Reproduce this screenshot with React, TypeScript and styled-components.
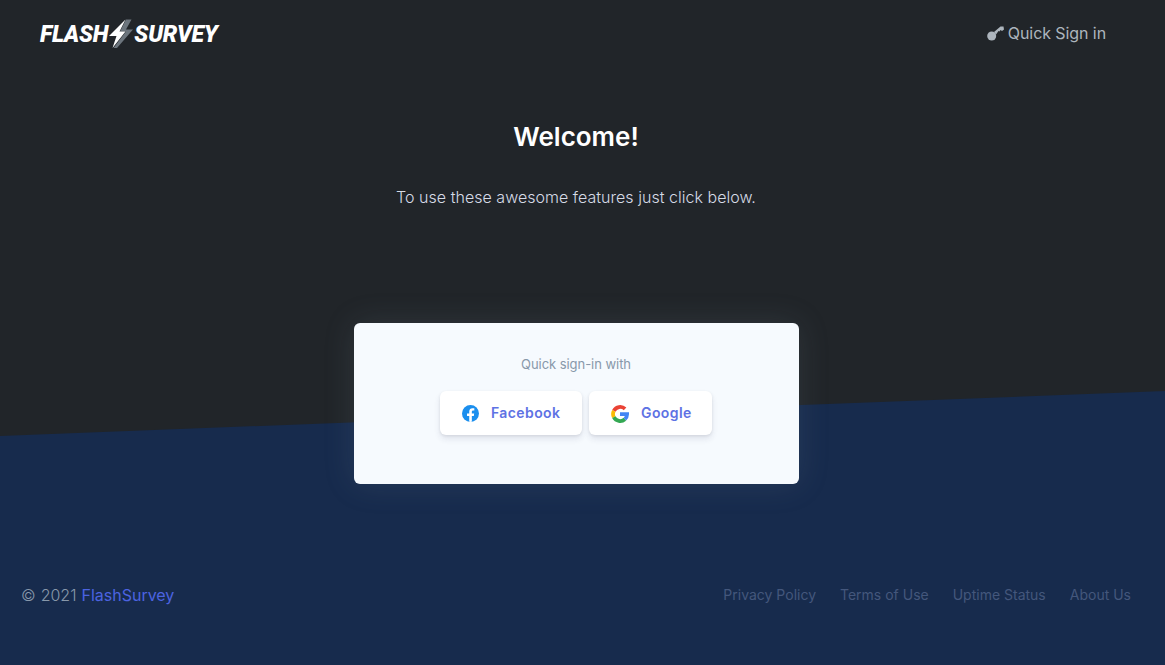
import React from 'react';
import styled, {createGlobalStyle} from "styled-components";

const GlobalStyle = createGlobalStyle`
  html, body {
    margin: 0;
    padding: 0;
    height: 100%;
  }
  body {
    font-family: Inter, "Liberation Sans", sans-serif;
    background: #212529;
  }
`;

const Page = styled.div`
  position: relative;
  width: 100%;
  height: 665px;
  overflow: hidden;
  background: #212529;
  display: flex;
  flex-direction: column;

  /* slanted blue band behind the content */
  &::before {
    content: "";
    position: absolute;
    left: 0;
    right: 0;
    top: 390px;
    bottom: 0;
    background: #172b4d;
    clip-path: polygon(0 46px, 100% 1px, 100% 100%, 0 100%);
  }
`;

const Header = styled.header`
  position: relative;
  height: 66px;
  padding: 0 59px 0 40px;
  display: flex;
  align-items: center;
  justify-content: space-between;
`;

const Logo = styled.a`
  display: flex;
  align-items: center;
  color: #fff;
  font-family: Roboto, Inter, sans-serif;
  font-size: 23px;
  font-weight: 900;
  font-style: italic;
  letter-spacing: -0.2px;
  line-height: 1;
`;

const LogoWord = styled.span`
  padding-top: 2px;
`;

const LogoBolt = styled.svg`
  width: 26px;
  height: 34px;
`;

const SignInLink = styled.a`
  display: flex;
  align-items: center;
  gap: 3px;
  color: #adb5bd;
  font-size: 16px;
  font-weight: 400;
  letter-spacing: -0.08px;
`;

const Main = styled.main`
  position: relative;
  padding-right: 13px;
`;

const Hero = styled.section`
  display: flex;
  flex-direction: column;
  align-items: center;
  padding-top: 55px;
`;

const Title = styled.h1`
  margin: 0;
  color: #fff;
  font-size: 26px;
  font-weight: 600;
  line-height: 32px;
`;

const Lead = styled.p`
  margin: 32px 0 0;
  color: #d6dbe6;
  font-size: 16px;
  font-weight: 300;
  letter-spacing: .03px;
  line-height: 24px;
`;

const Card = styled.div`
  box-sizing: border-box;
  width: 445px;
  height: 161px;
  margin: 114px auto 0;
  padding-top: 33px;
  background: #f6fafe;
  border-radius: 6px;
  box-shadow: 0 0 32px 0 rgba(136, 152, 170, .15);
  display: flex;
  flex-direction: column;
  align-items: center;
`;

const CardLabel = styled.div`
  color: #8898aa;
  font-size: 13px;
  font-weight: 400;
  letter-spacing: -0.05px;
  line-height: 17px;
`;

const ButtonRow = styled.div`
  display: flex;
  gap: 7px;
  margin-top: 18px;
`;

const SocialButton = styled.button<{$width: number}>`
  box-sizing: border-box;
  width: ${p => p.$width}px;
  height: 44px;
  padding: 0 0 2px 22px;
  border: 0;
  border-radius: 6px;
  background: #fff;
  color: #5e72e4;
  font-family: inherit;
  font-size: 14px;
  font-weight: 600;
  letter-spacing: .4px;
  display: flex;
  align-items: center;
  gap: 12px;
  box-shadow: 0 4px 6px rgba(50, 50, 93, .11), 0 1px 3px rgba(0, 0, 0, .08);

  svg {
    margin-top: 3px;
  }
`;

const Footer = styled.footer`
  position: relative;
  margin-top: 100px;
  padding: 0 34px 0 22px;
  display: flex;
  justify-content: space-between;
  align-items: center;
  height: 22px;
`;

const Copyright = styled.div`
  color: #8898aa;
  font-size: 16px;
  font-weight: 300;
  margin-left: -1px;
  word-spacing: .5px;
`;

const BrandLink = styled.a`
  color: #4c63e0;
  font-weight: 400;
`;

const FooterNav = styled.nav`
  display: flex;
  gap: 24px;
  margin-top: -1px;
`;

const FooterLink = styled.a`
  color: #44577c;
  font-size: 14px;
  font-weight: 400;
`;

const KeyIcon = () => (
  <svg width="18" height="18" viewBox="0 0 18 18">
    <circle cx="4.700" cy="12" r="4.500" fill="#adb5bd"/>
    <path d="M7 8 L13.500 2.500 L16.500 2.500 L17 5.500 L15 7 L13.500 6 L12.500 7.500 L11.500 7 L9 10.500 Z" fill="#adb5bd"/>
  </svg>
);

const FacebookIcon = () => (
  <svg width="17" height="17" viewBox="0 0 24 24">
    <defs>
      <clipPath id="fb-disc"><circle cx="12" cy="12" r="12"/></clipPath>
    </defs>
    <circle cx="12" cy="12" r="12" fill="#1b8fee"/>
    <path clipPath="url(#fb-disc)" d="M16.700 15.500l.5-3.500h-3.300V9.800c0-1 .5-1.900 2-1.900h1.500v-3s-1.400-.2-2.700-.2c-2.700 0-4.500 1.700-4.500 4.600V12H7.100v3.500h3.100V24h3.700v-8.500z" fill="#fff"/>
  </svg>
);

// ring segments drawn as thick strokes, the G is heavier here than the stock mark
const GoogleIcon = () => (
  <svg width="18" height="18" viewBox="0 0 48 48" fill="none" strokeWidth="10">
    <path stroke="#EA4335" d="M7.500 15.500A19 19 0 0 1 37.500 10.500"/>
    <path stroke="#FBBC05" d="M7.500 32.500A19 19 0 0 1 7.500 15.500"/>
    <path stroke="#34A853" d="M37 38A19 19 0 0 1 7.500 32.500"/>
    <path stroke="#4285F4" d="M24 24.500H43A19 19 0 0 1 37 38"/>
  </svg>
);

const App: React.FC = () => {
  return (
    <Page>
      <GlobalStyle/>
      <Header>
        <Logo>
          <LogoWord>FLASH</LogoWord>
          <LogoBolt viewBox="0 0 26 34">
            <path d="M18 3.500 L23.500 3.500 L18 13.500 L25 13.500 L9 32 L5.500 32 L18 15.500 L12 15.500 Z" fill="#6c757d"/>
            <path d="M17.500 3.500 L1 20 L8.500 20 L4.500 32 L17.500 15.500 L11.500 15.500 Z" fill="#fff"/>
          </LogoBolt>
          <LogoWord>SURVEY</LogoWord>
        </Logo>
        <SignInLink>
          <KeyIcon/>
          Quick Sign in
        </SignInLink>
      </Header>
      <Main>
        <Hero>
          <Title>Welcome!</Title>
          <Lead>To use these awesome features just click below.</Lead>
        </Hero>
        <Card>
          <CardLabel>Quick sign-in with</CardLabel>
          <ButtonRow>
            <SocialButton $width={142}><FacebookIcon/>Facebook</SocialButton>
            <SocialButton $width={123}><GoogleIcon/>Google</SocialButton>
          </ButtonRow>
        </Card>
      </Main>
      <Footer>
        <Copyright>© 2021 <BrandLink>FlashSurvey</BrandLink></Copyright>
        <FooterNav>
          <FooterLink>Privacy Policy</FooterLink>
          <FooterLink>Terms of Use</FooterLink>
          <FooterLink>Uptime Status</FooterLink>
          <FooterLink>About Us</FooterLink>
        </FooterNav>
      </Footer>
    </Page>
  );
};

export default App;
